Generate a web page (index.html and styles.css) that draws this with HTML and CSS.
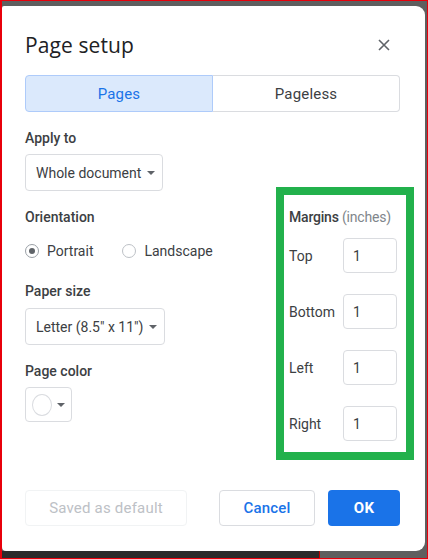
FILE: index.html
```html
<!DOCTYPE html>
<html lang="en">
<head>
<meta charset="utf-8">
<title>Page setup</title>
<link rel="stylesheet" href="styles.css">
</head>
<body>
<div class="frame">
  <div class="dialog">
    <div class="header">
      <h1 class="title">Page setup</h1>
      <button class="close" aria-label="Close">
        <svg width="12" height="12" viewBox="0 0 12 12"><path d="M1 1L11 11M11 1L1 11" stroke="#5f6368" stroke-width="1.6" fill="none"/></svg>
      </button>
    </div>
    <div class="segment">
      <div class="seg seg-active">Pages</div>
      <div class="seg">Pageless</div>
    </div>
    <div class="body">
      <div class="left">
        <div class="label">Apply to</div>
        <div class="select select-apply">Whole document <span class="caret"></span></div>
        <div class="label gap-label">Orientation</div>
        <div class="radios">
          <label class="radio"><span class="dot checked"></span>Portrait</label>
          <label class="radio"><span class="dot"></span>Landscape</label>
        </div>
        <div class="label gap-label2">Paper size</div>
        <div class="select select-paper">Letter (8.5" x 11") <span class="caret"></span></div>
        <div class="label gap-label">Page color</div>
        <div class="color-btn"><span class="swatch"></span><span class="caret"></span></div>
      </div>
      <div class="margins">
        <div class="m-title">Margins <span class="muted">(inches)</span></div>
        <div class="m-row"><span class="m-label">Top</span><div class="m-input">1</div></div>
        <div class="m-row"><span class="m-label">Bottom</span><div class="m-input">1</div></div>
        <div class="m-row"><span class="m-label">Left</span><div class="m-input">1</div></div>
        <div class="m-row"><span class="m-label">Right</span><div class="m-input">1</div></div>
      </div>
    </div>
    <div class="footer">
      <button class="btn btn-disabled">Saved as default</button>
      <div class="footer-right">
        <button class="btn btn-cancel">Cancel</button>
        <button class="btn btn-ok">OK</button>
      </div>
    </div>
  </div>
  <div class="bottom-strip">
    <div class="strip-dark"></div>
    <div class="strip-gray"></div>
  </div>
</div>
</body>
</html>
```
FILE: styles.css
```css
* { box-sizing: border-box; }
html, body { margin: 0; padding: 0; background: #5f5f5f; }
body { font-family: Roboto, "Liberation Sans", sans-serif; color: #3c4043; }
.frame {
  width: 428px;
  height: 559px;
  border: 1px solid #e8000b;
  border-left-width: 2px;
  background: #5f5f5f;
  padding-top: 5px;
  display: flex;
  flex-direction: column;
  overflow: hidden;
}
.dialog {
  width: 423px;
  height: 545px;
  background: #fff;
  border-radius: 2px 9px 9px 4px;
  padding: 24px 25px 25px 23px;
  display: flex;
  flex-direction: column;
}
.header {
  display: flex;
  justify-content: space-between;
  align-items: center;
  height: 30px;
}
.title {
  margin: 0;
  font-family: "Open Sans", Roboto, sans-serif;
  font-weight: 400;
  font-size: 21px;
  line-height: 30px;
  color: #202124;
  letter-spacing: 0.1px;
}
.close {
  border: 0;
  background: none;
  padding: 0;
  margin-right: 10px;
  width: 12px;
  height: 12px;
  display: flex;
}
.segment {
  display: flex;
  margin-top: 15px;
  height: 37px;
}
.seg {
  flex: 1;
  display: flex;
  align-items: center;
  justify-content: center;
  font-size: 15px;
  font-weight: 400;
  color: #3c4043;
  border: 1px solid #dadce0;
  border-left: 0;
  border-radius: 0 4px 4px 0;
  letter-spacing: 0.2px;
}
.seg-active {
  background: #dbe9fc;
  border: 1px solid #aecbfa;
  border-radius: 4px 0 0 4px;
  color: #1a73e8;
}
.body {
  display: flex;
  justify-content: space-between;
  margin-top: 16px;
  flex: 1;
}
.left { display: flex; flex-direction: column; align-items: flex-start; }
.label {
  font-size: 14px;
  font-weight: 500;
  line-height: 20px;
  color: #3c4043;
}
.gap-label { margin-top: 16px; }
.gap-label2 { margin-top: 20px; }
.select {
  margin-top: 6px;
  height: 37px;
  border: 1px solid #dadce0;
  border-radius: 4px;
  display: flex;
  align-items: center;
  padding: 0 9px 0 10px;
  font-size: 14px;
  color: #3c4043;
  gap: 6px;
  white-space: nowrap;
}
.select-apply { width: 138px; }
.select-paper { width: 140px; margin-top: 7px; }
.caret {
  flex: none;
  width: 0;
  height: 0;
  border-left: 4px solid transparent;
  border-right: 4px solid transparent;
  border-top: 4px solid #5f6368;
  margin-left: auto;
}
.radios {
  display: flex;
  gap: 29px;
  margin-top: 14px;
  height: 20px;
  align-items: center;
}
.radio {
  display: flex;
  align-items: center;
  font-size: 14px;
  color: #3c4043;
  gap: 8px;
}
.dot {
  width: 14px;
  height: 14px;
  border-radius: 50%;
  border: 1px solid #bdc1c6;
  display: flex;
  align-items: center;
  justify-content: center;
}
.dot.checked { border-color: #9aa0a6; }
.dot.checked::after {
  content: "";
  width: 6px;
  height: 6px;
  border-radius: 50%;
  background: #5f6368;
}
.color-btn {
  margin-top: 6px;
  width: 47px;
  height: 35px;
  border: 1px solid #dadce0;
  border-radius: 4px;
  display: flex;
  align-items: center;
  padding: 0 6px 0 6px;
  gap: 4px;
}
.swatch {
  width: 22px;
  height: 22px;
  border-radius: 50%;
  border: 1px solid #dadce0;
  background: #fff;
}
.color-btn .caret { margin-left: 1px; }
.margins {
  margin-top: 59px;
  margin-right: -14px;
  width: 138px;
  height: 273px;
  border: 8px solid #22b14c;
  padding: 12px 9px 0 5px;
  display: flex;
  flex-direction: column;
}
.m-title {
  font-size: 14px;
  font-weight: 500;
  line-height: 20px;
  color: #3c4043;
  white-space: nowrap;
  letter-spacing: -0.2px;
}
.muted { color: #80868b; font-weight: 400; }
.m-row {
  display: flex;
  justify-content: space-between;
  align-items: center;
  margin-top: 11px;
  height: 35px;
}
.m-row + .m-row { margin-top: 21px; }
.m-label { font-size: 14px; color: #3c4043; }
.m-input {
  width: 54px;
  height: 35px;
  border: 1px solid #dadce0;
  border-radius: 4px;
  display: flex;
  align-items: center;
  padding-left: 9px;
  font-size: 14px;
  color: #3c4043;
}
.footer {
  display: flex;
  justify-content: space-between;
  align-items: center;
}
.footer-right { display: flex; gap: 13px; }
.btn {
  font-family: Roboto, "Liberation Sans", sans-serif;
  font-size: 15px;
  font-weight: 500;
  height: 36px;
  border-radius: 4px;
  padding: 0;
  background: #fff;
  letter-spacing: 0.2px;
}
.btn-disabled {
  width: 162px;
  border: 1px solid #f1f3f4;
  color: #bdc1c6;
  font-weight: 400;
}
.btn-cancel {
  width: 96px;
  border: 1px solid #dadce0;
  color: #1a73e8;
}
.btn-ok {
  width: 72px;
  border: 0;
  background: #1a73e8;
  color: #fff;
  font-weight: 700;
}
.bottom-strip {
  display: flex;
  flex: 1;
}
.strip-dark { width: 318px; background: #2b2b2b; border-right: 1px solid #b00; }
.strip-gray { flex: 1; background: #5f5f5f; }
```
